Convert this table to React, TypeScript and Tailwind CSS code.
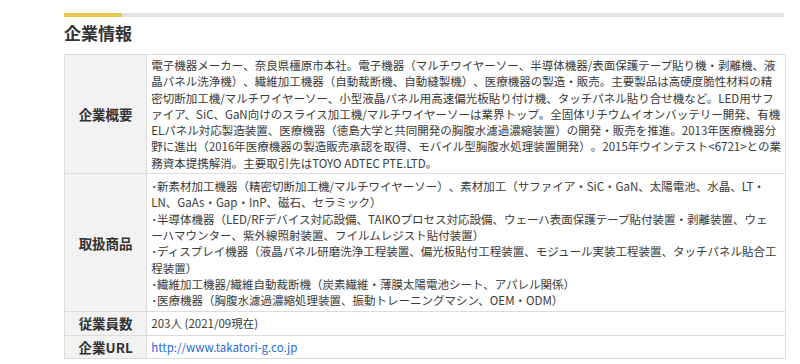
import React from "react";

const overview = [
  "電子機器メーカー、奈良県橿原市本社。電子機器（マルチワイヤーソー、半導体機器/表面保護テープ貼り機・剥離機、液",
  "晶パネル洗浄機）、繊維加工機器（自動裁断機、自動縫製機）、医療機器の製造・販売。主要製品は高硬度脆性材料の精",
  "密切断加工機/マルチワイヤーソー、小型液晶パネル用高速偏光板貼り付け機、タッチパネル貼り合せ機など。LED用サフ",
  "ァイア、SiC、GaN向けのスライス加工機/マルチワイヤーソーは業界トップ。全固体リチウムイオンバッテリー開発、有機",
  "ELパネル対応製造装置、医療機器（徳島大学と共同開発の胸腹水濾過濃縮装置）の開発・販売を推進。2013年医療機器分",
  "野に進出（2016年医療機器の製造販売承認を取得、モバイル型胸腹水処理装置開発）。2015年ウインテスト<6721>との業",
  "務資本提携解消。主要取引先はTOYO ADTEC PTE.LTD。",
];

const products = [
  "･新素材加工機器（精密切断加工機/マルチワイヤーソー）、素材加工（サファイア・SiC・GaN、太陽電池、水晶、LT・",
  "LN、GaAs・Gap・InP、磁石、セラミック）",
  "･半導体機器（LED/RFデバイス対応設備、TAIKOプロセス対応設備、ウェーハ表面保護テープ貼付装置・剥離装置、ウェ",
  "ーハマウンター、紫外線照射装置、フイルムレジスト貼付装置）",
  "･ディスプレイ機器（液晶パネル研磨洗浄工程装置、偏光板貼付工程装置、モジュール実装工程装置、タッチパネル貼合工",
  "程装置）",
  "･繊維加工機器/繊維自動裁断機（炭素繊維・薄膜太陽電池シート、アパレル関係）",
  "･医療機器（胸腹水濾過濃縮処理装置、振動トレーニングマシン、OEM・ODM）",
];

function Lines({ lines }: { lines: string[] }) {
  return (
    <>
      {lines.map((l, i) => (
        <div key={i} className="whitespace-nowrap">
          {l}
        </div>
      ))}
    </>
  );
}

function Row({
  label,
  children,
  pad = "py-[3px]",
}: {
  label: string;
  children: React.ReactNode;
  pad?: string;
}) {
  return (
    <tr>
      <th className="w-[87px] border border-[#dcdcdc] bg-[#f2f2f2] text-center align-middle text-[13.5px] font-bold text-[#333]">
        {label}
      </th>
      <td className={`border border-[#dcdcdc] px-[4px] ${pad} align-top`}>{children}</td>
    </tr>
  );
}

export default function App() {
  return (
    <div
      className="min-h-[364px] bg-white pt-[13px] pl-[64px] text-[#3a3a3a] [text-spacing-trim:space-all] [font-feature-settings:'chws'_0,'halt'_0]"
      style={{ fontFamily: '"Noto Sans CJK JP", "Noto Sans", sans-serif' }}
    >
      <div className="flex h-[4px] w-[720px] bg-[#e3e3e3]">
        <div className="w-[58px] bg-[#e8c64f]" />
      </div>
      <h2 className="mt-[4px] mb-[9px] text-[17px] font-bold leading-[24px] text-[#333]">
        企業情報
      </h2>
      <table className="w-[722px] border-collapse text-[11.5px] leading-[16.3px]">
        <tbody>
          <Row label="企業概要" pad="py-[2px]">
            <Lines lines={overview} />
          </Row>
          <Row label="取扱商品" pad="pt-[4px] pb-[3px]">
            <Lines lines={products} />
          </Row>
          <Row label="従業員数">203人 (2021/09現在)</Row>
          <Row label="企業URL">
            <a href="#" className="text-[#2a6ad6]">
              http://www.takatori-g.co.jp
            </a>
          </Row>
        </tbody>
      </table>
    </div>
  );
}
